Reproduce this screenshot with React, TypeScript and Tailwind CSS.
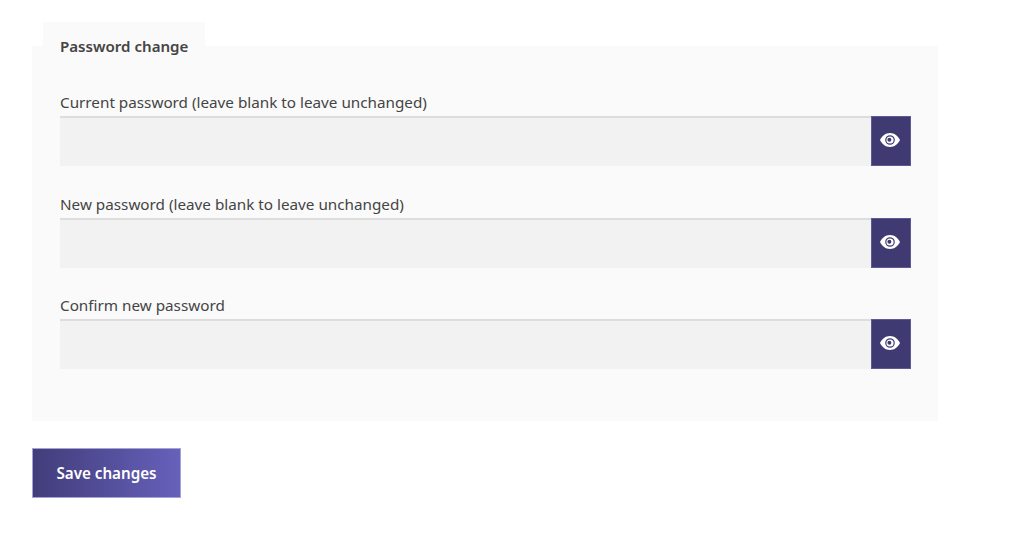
const fields = [
  "Current password (leave blank to leave unchanged)",
  "New password (leave blank to leave unchanged)",
  "Confirm new password",
];

function EyeIcon() {
  return (
    <svg width="20" height="14" viewBox="0 0 20 14" aria-hidden="true" className="relative -top-px -left-px">
      <path
        fill="#fff"
        fillRule="evenodd"
        d="M10 0C5.6 0 2 2.8 0 7c2 4.2 5.6 7 10 7s8-2.8 10-7c-2-4.2-5.6-7-10-7Zm0 2.2a4.8 4.8 0 1 1 0 9.6 4.8 4.8 0 0 1 0-9.6Z"
      />
      <path fill="#fff" fillRule="evenodd" d="M10 3.4a3.6 3.6 0 1 1 0 7.2 3.6 3.6 0 0 1 0-7.2Zm-.6 1.4a2 2 0 1 0 0 4 2 2 0 0 0 0-4Z" />
    </svg>
  );
}

export default function App() {
  return (
    <div className="min-h-[539px] bg-white pl-8 pt-[22px] font-['Noto_Sans','Lato',sans-serif] text-[#444]">
      <div className="w-[906px]">
        <div className="ml-[11px] -mb-[1px] flex h-[25px] w-[162px] items-end bg-[#fafafa] pl-[17px]">
          <span className="relative top-[9px] text-[15.1px] leading-[20px] font-semibold">Password change</span>
        </div>
        <div className="h-[375px] bg-[#fafafa] pl-7 pr-[27px] pt-[45px]">
          {fields.map((label) => (
            <div key={label} className="mb-[26.5px]">
              <label className="block h-[25px] text-[15.25px] leading-[22px]">{label}</label>
              <div className="flex h-[50px]">
                <input
                  type="password"
                  className="h-full min-w-0 flex-1 border-t-2 border-[#ddd] bg-[#f2f2f2] outline-none"
                />
                <button className="flex h-full w-10 items-center justify-center border border-[#5d5a93] bg-[#3f3a72]">
                  <EyeIcon />
                </button>
              </div>
            </div>
          ))}
        </div>
      </div>
      <button className="mt-[27px] h-[50px] w-[149px] border border-[#a5a2d6] bg-gradient-to-r from-[#423d7a] to-[#6661bb] text-[15.2px] font-semibold text-white">
        Save changes
      </button>
    </div>
  );
}
